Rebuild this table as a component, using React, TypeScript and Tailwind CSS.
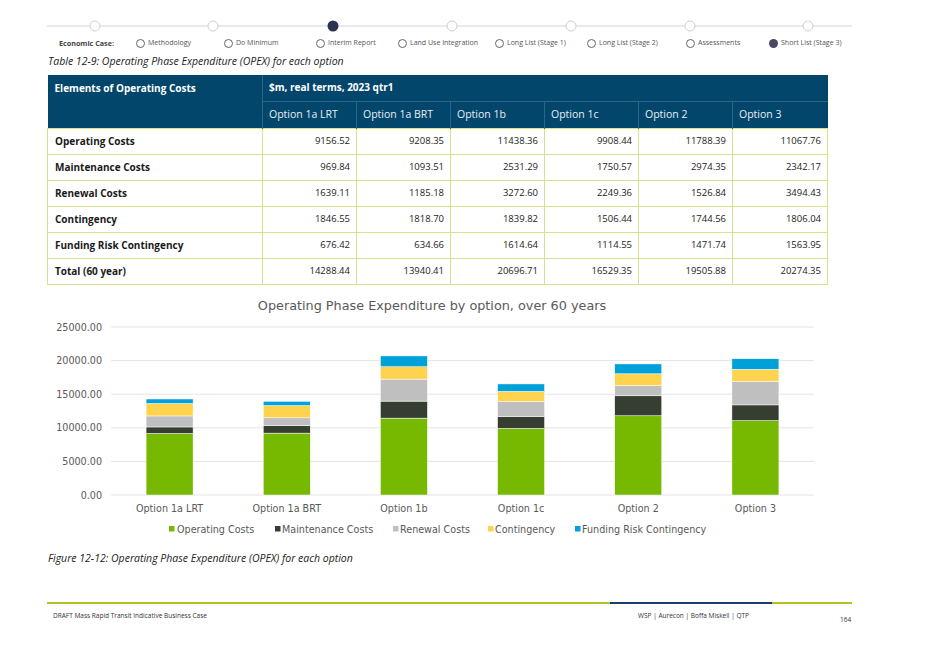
import React from "react"

const options = [
  { name: "Option 1a LRT", vals: [9156.52, 969.84, 1639.11, 1846.55, 676.42], total: 14288.44 },
  { name: "Option 1a BRT", vals: [9208.35, 1093.51, 1185.18, 1818.7, 634.66], total: 13940.41 },
  { name: "Option 1b", vals: [11438.36, 2531.29, 3272.6, 1839.82, 1614.64], total: 20696.71 },
  { name: "Option 1c", vals: [9908.44, 1750.57, 2249.36, 1506.44, 1114.55], total: 16529.35 },
  { name: "Option 2", vals: [11788.39, 2974.35, 1526.84, 1744.56, 1471.74], total: 19505.88 },
  { name: "Option 3", vals: [11067.76, 2342.17, 3494.43, 1806.04, 1563.95], total: 20274.35 },
]

const rows = ["Operating Costs", "Maintenance Costs", "Renewal Costs", "Contingency", "Funding Risk Contingency"]
const colors = ["#76b900", "#363d31", "#bfbfbf", "#ffd34e", "#00a1d9"]

const steps = [
  { label: "Methodology", w: "w-[88px]" },
  { label: "Do Minimum", w: "w-[92px]" },
  { label: "Interim Report", w: "w-[82px]" },
  { label: "Land Use Integration", w: "w-[97px]" },
  { label: "Long List (Stage 1)", w: "w-[92px]" },
  { label: "Long List (Stage 2)", w: "w-[99px]" },
  { label: "Assessments", w: "w-[83px]" },
  { label: "Short List (Stage 3)", w: "w-[100px]", active: true },
]

const fmt = (n: number) => n.toFixed(2)

function Progress() {
  const dots = [51, 169, 289, 408, 527, 646, 764]
  return (
    <svg width="812" height="14" className="block">
      <line x1="3" y1="7" x2="808" y2="7" stroke="#d4d4d4" strokeWidth="1" />
      {dots.map((cx, i) =>
        i === 2 ? (
          <circle key={cx} cx={cx} cy="7" r="5.5" fill="#2c3350" />
        ) : (
          <circle key={cx} cx={cx} cy="7" r="5" fill="#fff" stroke="#cfcfcf" strokeWidth="1" />
        )
      )}
    </svg>
  )
}

function Chart() {
  const base = 204
  const scale = 168 / 25000
  const left = 71
  const right = 774
  const band = (right - left) / 6
  const ticks = [0, 5000, 10000, 15000, 20000, 25000]
  const legend = [
    { x: 129, tx: 137, label: "Operating Costs" },
    { x: 235, tx: 242, label: "Maintenance Costs" },
    { x: 353, tx: 360, label: "Renewal Costs" },
    { x: 448, tx: 455, label: "Contingency" },
    { x: 535, tx: 542, label: "Funding Risk Contingency" },
  ]
  return (
    <svg width="790" height="250" className="block" style={{ fontFamily: "'DejaVu Sans', sans-serif" }}>
      <text x="392" y="19" textAnchor="middle" fontSize="12.8" fill="#595959">
        Operating Phase Expenditure by option, over 60 years
      </text>
      {ticks.map((t) => {
        const y = base - t * scale
        return (
          <g key={t}>
            <line x1={left} x2={right} y1={y} y2={y} stroke="#e4e4e4" strokeWidth="1" />
            <text x="62" y={y + 3.5} textAnchor="end" fontSize="9.6" fill="#595959">
              {t.toFixed(2)}
            </text>
          </g>
        )
      })}
      {options.map((o, i) => {
        const cx = left + band * i + band / 2
        let acc = 0
        return (
          <g key={o.name}>
            {o.vals.map((v, j) => {
              const h = v * scale
              const y = base - (acc + v) * scale
              acc += v
              return (
                <rect key={j} x={cx - 23.5} y={y} width="47" height={h} fill={colors[j]} stroke="#ffffff" strokeWidth="0.5" />
              )
            })}
            <text x={cx} y="221" textAnchor="middle" fontSize="9.6" fill="#595959">
              {o.name}
            </text>
          </g>
        )
      })}
      {legend.map((l, i) => (
        <g key={l.label}>
          <rect x={l.x} y="235" width="5.5" height="5.5" fill={colors[i]} />
          <text x={l.tx} y="241.5" fontSize="9.6" fill="#595959">
            {l.label}
          </text>
        </g>
      ))}
    </svg>
  )
}

export default function App() {
  return (
    <div className="w-[934px] h-[661px] bg-white overflow-hidden font-['Open_Sans',sans-serif] text-[#1a1a1a]">
      {/* stage tracker */}
      <div className="pl-[44px] pt-[19px]">
        <Progress />
      </div>
      <div className="flex items-center h-[12px] mt-[4px] pl-[59px] text-[7px] text-[#555]">
        <div className="w-[77px] font-bold text-[#444] text-[7.2px]">Economic Case:</div>
        {steps.map((s) => (
          <div key={s.label} className={`${s.w} flex items-center gap-[3px]`}>
            <span
              className={
                s.active
                  ? "w-[9px] h-[9px] rounded-full bg-[#4a4a66] shrink-0"
                  : "w-[9px] h-[9px] rounded-full border border-[#666] shrink-0"
              }
            />
            <span>{s.label}</span>
          </div>
        ))}
      </div>

      <p className="mt-[5px] pl-[48px] h-[14px] leading-[14px] italic text-[10.5px] text-[#222]">
        Table 12-9: Operating Phase Expenditure (OPEX) for each option
      </p>

      {/* table */}
      <div className="pl-[47px] mt-[7px]">
        <table className="border-collapse table-fixed w-[780px] text-[9.5px]">
          <colgroup>
            <col className="w-[215px]" />
            <col className="w-[94px]" />
            <col className="w-[94px]" />
            <col className="w-[94px]" />
            <col className="w-[94px]" />
            <col className="w-[94px]" />
            <col className="w-[95px]" />
          </colgroup>
          <thead>
            <tr className="h-[26px] bg-[#02466c] text-white text-[10px]">
              <th rowSpan={2} className="align-top text-left font-bold pl-[7px] pt-[6px] border-r border-[#2d6587]">
                Elements of Operating Costs
              </th>
              <th colSpan={6} className="text-left font-bold pl-[6px] border-b border-[#2d6587]">
                $m, real terms, 2023 qtr1
              </th>
            </tr>
            <tr className="h-[27px] bg-[#02466c] text-[#e8eef3] text-[10.5px]">
              {options.map((o) => (
                <th key={o.name} className="text-left font-normal pl-[6px] border-r border-[#2d6587] last:border-r-0">
                  {o.name}
                </th>
              ))}
            </tr>
          </thead>
          <tbody>
            {rows.map((r, i) => (
              <tr key={r} className="h-[26px]">
                <td className="border border-[#d6e28d] font-bold pl-[7px] text-[10px]">{r}</td>
                {options.map((o) => (
                  <td key={o.name} className="border border-[#d6e28d] text-right pr-[6px] text-[#222]">
                    {fmt(o.vals[i])}
                  </td>
                ))}
              </tr>
            ))}
            <tr className="h-[26px]">
              <td className="border border-[#d6e28d] font-bold pl-[7px] text-[10px]">Total (60 year)</td>
              {options.map((o) => (
                <td key={o.name} className="border border-[#d6e28d] text-right pr-[6px] text-[#222]">
                  {fmt(o.total)}
                </td>
              ))}
            </tr>
          </tbody>
        </table>
      </div>

      {/* chart */}
      <div className="pl-[40px] mt-[6px]">
        <Chart />
      </div>

      <p className="mt-[10px] pl-[48px] h-[14px] leading-[14px] italic text-[10.5px] text-[#222]">
        Figure 12-12: Operating Phase Expenditure (OPEX) for each option
      </p>

      {/* footer */}
      <div className="mt-[37px] ml-[47px] w-[805px] flex h-[2px]">
        <div className="w-[563px] bg-[#afc41c]" />
        <div className="w-[162px] bg-[#1b3d6d]" />
        <div className="flex-1 bg-[#afc41c]" />
      </div>
      <div className="flex pl-[53px] mt-[7px] text-[6.5px] text-[#333]">
        <span className="w-[585px]">DRAFT Mass Rapid Transit Indicative Business Case</span>
        <span className="w-[202px]">WSP | Aurecon | Boffa Miskell | QTP</span>
        <span className="mt-[4px]">164</span>
      </div>
    </div>
  )
}
